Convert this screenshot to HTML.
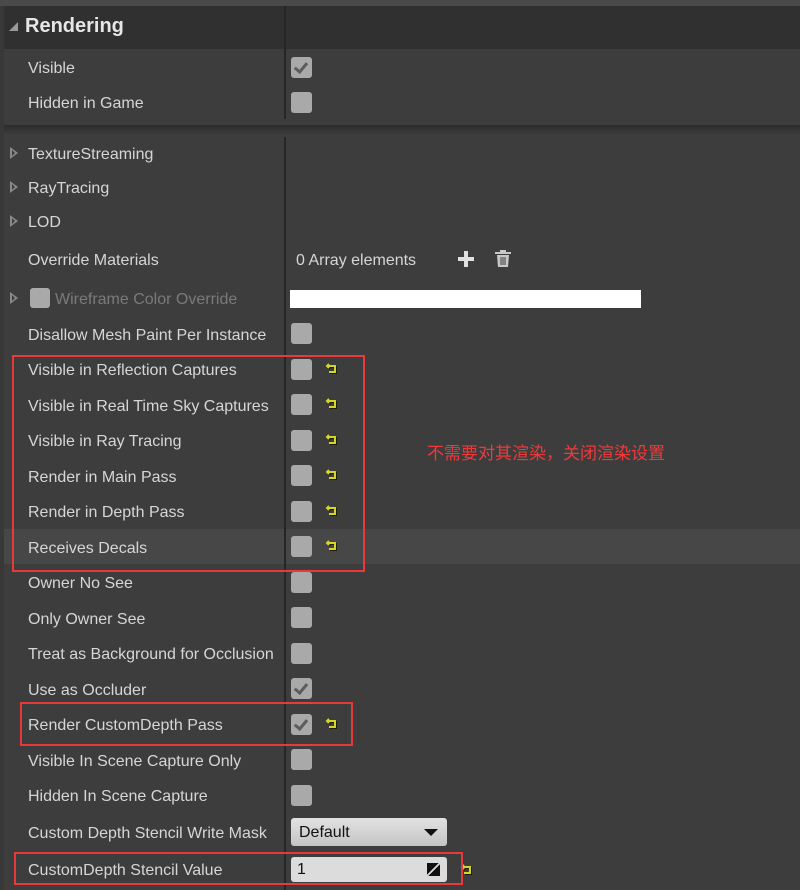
<!DOCTYPE html>
<html><head><meta charset="utf-8"><style>
*{margin:0;padding:0;box-sizing:border-box}
body{width:800px;height:890px;background:#3d3d3d;position:relative;overflow:hidden;font-family:"Liberation Sans","Noto Sans CJK SC",sans-serif;color:#d6d6d6;font-size:16px}
.a{position:absolute}
.l{position:absolute;left:28px;line-height:20px;white-space:nowrap;margin-top:2px}
.cb{position:absolute;left:291px;width:21px;height:21px;background:#a9a9a9;border-radius:3px}
.ck::after{content:"";position:absolute;left:6px;top:3px;width:5px;height:10px;border:solid #5c5c5c;border-width:0 3px 3px 0;transform:rotate(40deg)}
.rs{position:absolute;left:325px;width:14px;height:12px}
.tri{position:absolute;left:10px;width:0;height:0;border-left:8px solid #8a8a8a;border-top:6px solid transparent;border-bottom:6px solid transparent}
.tri::after{content:"";position:absolute;left:-6px;top:-3px;border-left:3px solid #3d3d3d;border-top:3px solid transparent;border-bottom:3px solid transparent}
.red{position:absolute;border:2px solid #e8393b}
</style></head><body>
<div class="a" style="left:0;top:0;width:800px;height:6px;background:#4a4a4a"></div>
<div class="a" style="left:4px;top:6px;width:796px;height:43px;background:#303030"></div>
<div class="a" style="left:4px;top:125px;width:796px;height:10px;background:linear-gradient(#2c2c2c,#3d3d3d)"></div>
<div class="a" style="left:0;top:6px;width:4px;height:884px;background:#383838"></div>
<div class="a" style="left:4px;top:529px;width:796px;height:35px;background:#474747"></div>
<div class="a" style="left:284px;top:6px;width:2px;height:113px;background:#262626"></div>
<div class="a" style="left:284px;top:137px;width:2px;height:753px;background:#262626"></div>
<div class="a" style="left:9px;top:22px;width:0;height:0;border-right:9px solid #9a9a9a;border-top:9px solid transparent"></div>
<div class="a" style="left:25px;top:15px;font-size:20px;font-weight:bold;color:#e6e6e6">Rendering</div>

<div class="l" style="top:57px">Visible</div><div class="cb ck" style="top:57px"></div>
<div class="l" style="top:92px">Hidden in Game</div><div class="cb" style="top:92px"></div>

<div class="tri" style="top:147px"></div><div class="l" style="top:143px">TextureStreaming</div>
<div class="tri" style="top:181px"></div><div class="l" style="top:177px">RayTracing</div>
<div class="tri" style="top:215px"></div><div class="l" style="top:211px">LOD</div>
<div class="l" style="top:249px">Override Materials</div>
<div class="a" style="left:296px;top:251px;line-height:20px">0 Array elements</div>
<div class="a" style="left:458px;top:257px;width:16px;height:4px;background:#e0e0e0"></div>
<div class="a" style="left:464px;top:251px;width:4px;height:16px;background:#e0e0e0"></div>
<svg class="a" style="left:494px;top:250px" width="18" height="18" viewBox="0 0 18 18"><rect x="1" y="2" width="16" height="2" fill="#c8c8c8"/><rect x="6" y="0" width="6" height="2" fill="#c8c8c8"/><path d="M3 5h12l-1 12H4z" fill="#c8c8c8"/><path d="M7 7v8M9 7v8M11 7v8" stroke="#3d3d3d" stroke-width="1"/></svg>

<div class="tri" style="top:292px"></div>
<div class="a" style="left:30px;top:288px;width:20px;height:20px;background:#a9a9a9;border-radius:3px"></div>
<div class="a" style="left:55px;top:290px;line-height:20px;color:#7a7a7a">Wireframe Color Override</div>
<div class="a" style="left:290px;top:290px;width:351px;height:18px;background:#fff"></div>

<div class="l" style="top:324px">Disallow Mesh Paint Per Instance</div><div class="cb" style="top:323px"></div>
<div class="l" style="top:359px">Visible in Reflection Captures</div><div class="cb" style="top:359px"></div>
<div class="l" style="top:395px">Visible in Real Time Sky Captures</div><div class="cb" style="top:394px"></div>
<div class="l" style="top:430px">Visible in Ray Tracing</div><div class="cb" style="top:430px"></div>
<div class="l" style="top:466px">Render in Main Pass</div><div class="cb" style="top:465px"></div>
<div class="l" style="top:501px">Render in Depth Pass</div><div class="cb" style="top:501px"></div>
<div class="l" style="top:537px">Receives Decals</div><div class="cb" style="top:536px"></div>
<div class="l" style="top:572px">Owner No See</div><div class="cb" style="top:572px"></div>
<div class="l" style="top:608px">Only Owner See</div><div class="cb" style="top:607px"></div>
<div class="l" style="top:643px">Treat as Background for Occlusion</div><div class="cb" style="top:643px"></div>
<div class="l" style="top:679px">Use as Occluder</div><div class="cb ck" style="top:678px"></div>
<div class="l" style="top:714px">Render CustomDepth Pass</div><div class="cb ck" style="top:714px"></div>
<div class="l" style="top:750px">Visible In Scene Capture Only</div><div class="cb" style="top:749px"></div>
<div class="l" style="top:785px">Hidden In Scene Capture</div><div class="cb" style="top:785px"></div>
<div class="l" style="top:822px">Custom Depth Stencil Write Mask</div>
<div class="a" style="left:291px;top:818px;width:156px;height:28px;background:linear-gradient(#e2e2e2,#c4c4c4);border-radius:3px;color:#111;padding-left:8px;line-height:29px">Default</div>
<div class="a" style="left:424px;top:829px;border-top:7px solid #111;border-left:7px solid transparent;border-right:7px solid transparent"></div>
<div class="l" style="top:859px">CustomDepth Stencil Value</div>
<div class="a" style="left:291px;top:857px;width:156px;height:25px;background:#dcdcdc;border-radius:3px;color:#111;padding-left:6px;line-height:26px">1</div>
<div class="a" style="left:427px;top:863px;width:13px;height:13px;background:linear-gradient(135deg,#111 45%,#dcdcdc 45%,#dcdcdc 55%,#111 55%)"></div>

<svg width="0" height="0" style="position:absolute"><defs><g id="r"><g transform="translate(1,1)"><path d="M4 1L2 3 4 5M2 3h8v6H4" fill="none" stroke="#1e1e00" stroke-width="2"/></g><path d="M4 1L2 3 4 5M2 3h8v6H4" fill="none" stroke="#d4d42a" stroke-width="2"/></g></defs></svg>
<svg class="rs" style="top:363px" viewBox="0 0 14 12"><use href="#r"/></svg>
<svg class="rs" style="top:398px" viewBox="0 0 14 12"><use href="#r"/></svg>
<svg class="rs" style="top:434px" viewBox="0 0 14 12"><use href="#r"/></svg>
<svg class="rs" style="top:469px" viewBox="0 0 14 12"><use href="#r"/></svg>
<svg class="rs" style="top:505px" viewBox="0 0 14 12"><use href="#r"/></svg>
<svg class="rs" style="top:540px" viewBox="0 0 14 12"><use href="#r"/></svg>
<svg class="rs" style="top:718px" viewBox="0 0 14 12"><use href="#r"/></svg>
<svg class="rs" style="left:460px;top:864px" viewBox="0 0 14 12"><use href="#r"/></svg>

<div class="red" style="left:12px;top:355px;width:353px;height:217px"></div>
<div class="red" style="left:20px;top:702px;width:333px;height:44px"></div>
<div class="red" style="left:14px;top:852px;width:449px;height:33px"></div>
<div class="a" style="left:427px;top:439px;color:#f03a3a;font-size:17px;white-space:nowrap">不需要对其渲染，关闭渲染设置</div>
</body></html>
